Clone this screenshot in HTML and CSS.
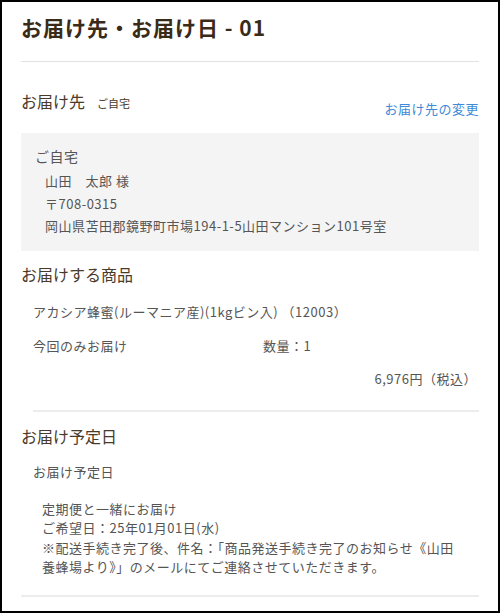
FILE: index.html
```html
<!DOCTYPE html>
<html lang="ja">
<head>
<meta charset="utf-8">
<link rel="stylesheet" href="styles.css">
</head>
<body>
<div class="frame">
  <h1 class="title">お届け先・お届け日 - 01</h1>
  <section class="sec sec-dest">
    <div class="sec-head">
      <h2 class="sec-title">お届け先<span class="sub">ご自宅</span></h2>
      <a class="link" href="#">お届け先の変更</a>
    </div>
    <div class="addr-box">
      <div class="addr-label">ご自宅</div>
      <div class="addr-lines">
        <div>山田　太郎 様</div>
        <div>〒708-0315</div>
        <div>岡山県苫田郡鏡野町市場194-1-5山田マンション101号室</div>
      </div>
    </div>
  </section>
  <section class="sec sec-items">
    <h2 class="sec-title">お届けする商品</h2>
    <div class="item">
      <div class="item-name">アカシア蜂蜜(ルーマニア産)(1kgビン入) （12003）</div>
      <div class="item-row">
        <span class="item-type">今回のみお届け</span>
        <span class="item-qty">数量：1</span>
      </div>
      <div class="item-price">6,976円（税込）</div>
    </div>
  </section>
  <section class="sec sec-date">
    <h2 class="sec-title">お届け予定日</h2>
    <div class="date-label">お届け予定日</div>
    <div class="date-text">
      定期便と一緒にお届け<br>
      ご希望日：25年01月01日(水)<br>
      ※配送手続き完了後、件名：「商品発送手続き完了のお知らせ《山田養蜂場より》」のメールにてご連絡させていただきます。
    </div>
  </section>
</div>
</body>
</html>
```

FILE: styles.css
```css
* { box-sizing: border-box; }
html, body { margin: 0; padding: 0; background: #fff; }
body {
  font-family: "Noto Sans CJK JP", "Noto Sans", sans-serif;
  color: #555;
}
.frame {
  width: 500px;
  height: 613px;
  border: 2px solid #000;
  padding: 0 19px;
  overflow: hidden;
}
.title {
  margin: 0;
  padding: 10px 0 19px;
  font-size: 21px;
  line-height: 30px;
  letter-spacing: 1px;
  font-weight: bold;
  color: #3a2a18;
  border-bottom: 1px solid #e2e2e2;
}
.sec-title {
  margin: 0;
  font-size: 16px;
  line-height: 24px;
  font-weight: normal;
  color: #4a3a2a;
}
.sub {
  font-size: 11px;
  margin-left: 12px;
  color: #4a3a2a;
}
.sec-dest { padding-top: 27px; }
.sec-head {
  display: flex;
  justify-content: space-between;
  align-items: flex-end;
}
.link {
  font-size: 13px;
  letter-spacing: 0.5px;
  color: #3d8ad8;
  text-decoration: none;
  line-height: 20px;
  margin-bottom: -4px;
}
.addr-box {
  margin-top: 18px;
  background: #f4f4f4;
  padding: 11px 14px 13px;
  font-size: 13px;
  letter-spacing: 0.5px;
}
.addr-label { font-size: 14px; line-height: 24px; }
.addr-lines { padding-left: 10px; line-height: 22.5px; margin-top: 2px; }
.sec-items { padding-top: 11px; }
.item { padding-left: 12px; font-size: 13px; letter-spacing: 0.5px; }
.item-name { margin-top: 15px; line-height: 22px; }
.item-row { margin-top: 12px; line-height: 22px; display: flex; }
.item-type { width: 230px; }
.item-price {
  text-align: right;
  margin-top: 11px;
  line-height: 22px;
  padding-right: 2px;
  padding-bottom: 20px;
  border-bottom: 2px solid #ececec;
}
.sec-date { padding-top: 12px; border-bottom: 2px solid #ececec; padding-bottom: 18px; }
.date-label { padding-left: 12px; font-size: 13px; letter-spacing: 0.5px; line-height: 22px; margin-top: 13px; }
.date-text {
  padding-left: 21px;
  padding-right: 12px;
  margin-top: 16px;
  font-size: 13px;
  letter-spacing: 0.5px;
  line-height: 19.5px;
}
```
